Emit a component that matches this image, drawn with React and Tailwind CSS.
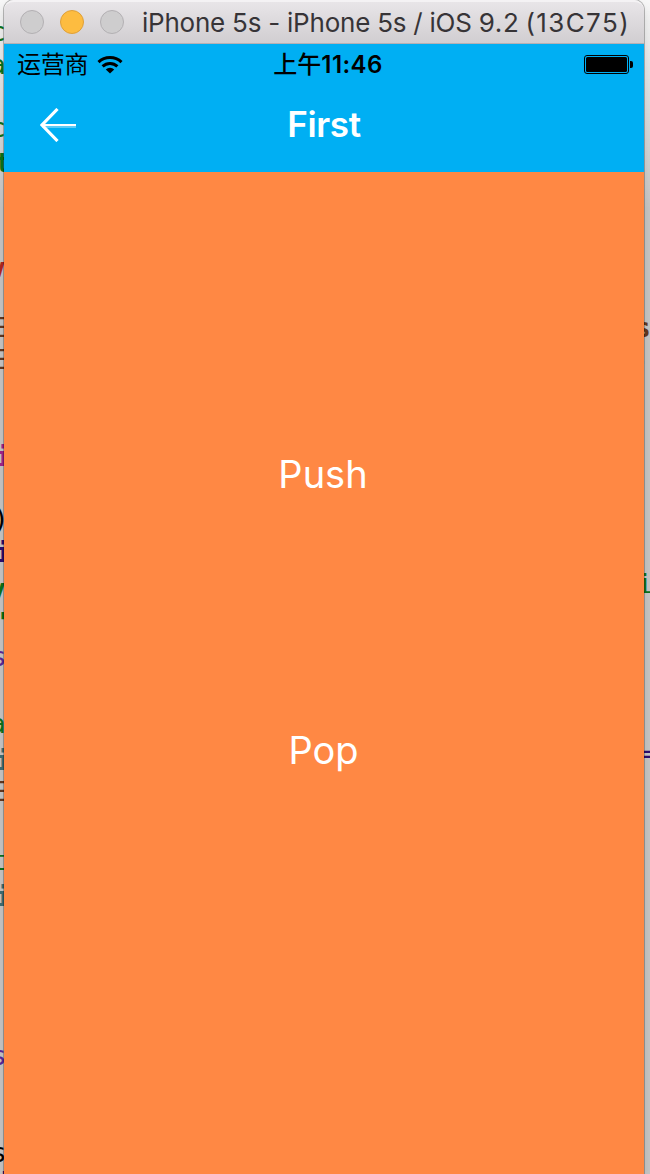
const leftCode = [
  { t: 'c', x: -10, y: 34, c: 'text-[#0b7319]' },
  { t: 'a', x: -10, y: 67, c: 'text-[#0b7319]' },
  { t: 'c', x: -10, y: 130, c: 'text-[#0b7319]' },
  { t: 't', x: -5, y: 165, c: 'text-[#0b7319] font-bold' },
  { t: 'v', x: -10, y: 270, c: 'text-[#b3261e] font-bold' },
  { t: 'E', x: -9, y: 330, c: 'text-[#643820]' },
  { t: 'E', x: -9, y: 362, c: 'text-[#643820]' },
  { t: 'i', x: -5, y: 459, c: 'text-[#a3238b] font-bold' },
  { t: ')', x: -7, y: 521, c: 'text-black' },
  { t: 'i', x: -5, y: 555, c: 'text-[#2e0d6e] font-bold' },
  { t: 'y', x: -10, y: 591, c: 'text-[#0b7319] font-bold' },
  { t: '"', x: -8, y: 625, c: 'text-[#0b7319] font-bold' },
  { t: 's', x: -9, y: 659, c: 'text-[#5c2699]' },
  { t: 'a', x: -10, y: 726, c: 'text-[#0b7319]' },
  { t: 'i', x: -5, y: 763, c: 'text-[#3f6e74] font-bold' },
  { t: 'E', x: -9, y: 794, c: 'text-[#643820]' },
  { t: 't', x: -9, y: 863, c: 'text-[#0b7319]' },
  { t: 'i', x: -5, y: 899, c: 'text-[#3f6e74] font-bold' },
  { t: 's', x: -9, y: 1058, c: 'text-[#5c2699]' },
  { t: 's', x: -9, y: 1155, c: 'text-black' },
  { t: 'i', x: -4, y: 1184, c: 'text-[#2e0d6e]' },
];

const rightCode = [
  { t: 's', x: 635, y: 330, c: 'text-[#643820] font-bold' },
  { t: ',', x: 634, y: 358, c: 'text-[#2e0d6e]' },
  { t: 'i', x: 637, y: 586, c: 'text-[#0b7319]' },
  { t: '=', x: 636, y: 756, c: 'text-[#2e0d6e]' },
];

function EditorBehind() {
  return (
    <div className="absolute inset-0 overflow-hidden font-['DejaVu_Sans_Mono',monospace] text-[26px] leading-[32px]">
      <div className="absolute inset-0 bg-linear-to-b from-black/0 via-black/20 via-[210px] to-black/20" />
      {[...leftCode, ...rightCode].map((g, i) => (
        <span key={i} className={`absolute ${g.c}`} style={{ left: g.x, top: g.y - 18 }}>
          {g.t}
        </span>
      ))}
    </div>
  );
}

function TitleBar() {
  return (
    <header className="flex h-[44px] shrink-0 items-center rounded-t-[10px] border-t-2 border-b border-t-[#f4f2f4] border-b-[#b5b0b4] bg-linear-to-b from-[#e8e5e8] to-[#d1ced1] pb-[2px] pl-4">
      <div className="flex gap-4">
        <i className="size-6 rounded-full border border-[#b3b0b3] bg-[#cecdce]" />
        <i className="size-6 rounded-full border border-[#dfa039] bg-[#fdbc40]" />
        <i className="size-6 rounded-full border border-[#b3b0b3] bg-[#cecdce]" />
      </div>
      <h1 className="ml-[18px] mt-[2px] whitespace-pre font-['Inter',sans-serif] text-[26px] leading-8 tracking-[-0.23px] text-[#373437]">
        iPhone 5s - iPhone 5s / iOS <span className="tracking-[0.6px]">9.2</span>
        <span className="ml-[6px] tracking-[1.4px]">(13C75)</span>
      </h1>
    </header>
  );
}

function StatusBar() {
  return (
    <div className="grid h-10 grid-cols-3 items-center pl-[13px] pr-[11px] font-['Inter','Noto_Sans_CJK_SC',sans-serif] text-[24px] leading-10 text-black">
      <div className="flex items-center gap-[9px]">
        <span className="whitespace-nowrap tracking-[-0.3px]">运营商</span>
        <svg className="h-[20px] w-[26px]" viewBox="0 0 26 20" fill="none" stroke="currentColor" strokeWidth="3">
          <path d="M1.5 7.2a16.6 16.6 0 0 1 23 0M5.6 11.4a10.7 10.7 0 0 1 14.8 0" />
          <path d="M13 18.5l-4.2-4.1a6.1 6.1 0 0 1 8.4 0z" fill="currentColor" stroke="none" />
        </svg>
      </div>
      <span className="mt-px whitespace-nowrap pl-[6px] text-center font-medium">
        上午<span className="font-semibold tracking-[0.4px]">11:46</span>
      </span>
      <svg className="h-[19px] w-[49px] justify-self-end" viewBox="0 0 49 19">
        <rect x=".5" y=".5" width="44" height="18" rx="2.5" fill="none" stroke="black" />
        <rect x="2" y="2" width="41" height="15" rx="1.5" />
        <path d="M46 6h1q2 0 2 2v3q0 2-2 2h-1z" />
      </svg>
    </div>
  );
}

export default function App() {
  return (
    <div className="relative h-[1174px] w-[650px] overflow-hidden bg-[#f7f7f7]">
      <EditorBehind />
      <main className="relative ml-[4px] flex h-full w-[640px] flex-col rounded-t-[10px] shadow-[0_0_0_1px_rgba(0,0,0,0.25),0_6px_12px_rgba(0,0,0,0.12)]">
        <TitleBar />
        <section className="h-[128px] shrink-0 bg-[#00aff3]">
          <StatusBar />
          <nav className="grid h-[82px] grid-cols-3 items-center">
            <svg className="ml-[36px] h-[34px] w-[37px]" viewBox="0 0 37 34" fill="none" stroke="white">
              <path d="M17.5 1L2 17l15.5 16" strokeWidth="3.2" />
              <path d="M2 17h34" strokeWidth="2" />
              <path d="M2 19h34" strokeWidth="2" opacity=".35" />
            </svg>
            <h2 className="-mt-px text-center font-['Inter',sans-serif] text-[35px] font-semibold tracking-[-0.3px] text-white">First</h2>
          </nav>
        </section>
        <section className="flex flex-1 flex-col items-center bg-[#ff8844] pt-[274px] font-['Inter',sans-serif] text-[38px] leading-[56px] text-white">
          <button className="-ml-[2px] h-[56px]">Push</button>
          <button className="-ml-px mt-[220px] h-[56px]">Pop</button>
        </section>
      </main>
    </div>
  );
}
